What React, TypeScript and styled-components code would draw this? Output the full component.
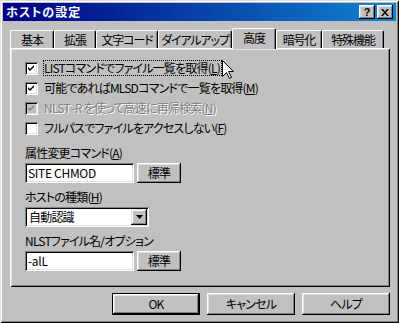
import React from "react";
import styled, { createGlobalStyle, css } from "styled-components";

const Global = createGlobalStyle`
  html, body { margin: 0; padding: 0; background: #c0c0c0; }
  body { font-family: "Noto Sans CJK JP", "Liberation Sans", sans-serif; font-size: 12px; }
`;

const FONT = `"Noto Sans CJK JP", "Liberation Sans", sans-serif`;

const Window = styled.div`
  position: relative;
  width: 399px;
  height: 323px;
  box-sizing: border-box;
  padding: 3px;
  background: #c0c0c0;
  box-shadow: inset 1px 1px #dfdfdf, inset -1px -1px #000, inset 2px 2px #fff, inset -2px -2px #808080;
  display: flex;
  flex-direction: column;
  font-family: ${FONT};
  font-size: 12px;
  font-feature-settings: "palt";
  letter-spacing: -0.8px;
  color: #000;
`;

const TitleBar = styled.div`
  height: 18px;
  display: flex;
  align-items: center;
  justify-content: space-between;
  background: linear-gradient(90deg, #000080, #1084d0);
  padding: 0 3px 0 3px;
`;

const Title = styled.span`
  color: #fff;
  font-weight: bold;
  font-size: 12px;
  line-height: 18px;
  letter-spacing: 1px;
`;

const CapButtons = styled.div`
  display: flex;
  gap: 2px;
`;

const CapBtn = styled.div`
  width: 16px;
  height: 14px;
  box-sizing: border-box;
  background: #c0c0c0;
  box-shadow: inset -1px -1px #000, inset 1px 1px #fff, inset -2px -2px #808080, inset 2px 2px #dfdfdf;
  display: flex;
  align-items: center;
  justify-content: center;
  font-family: "Liberation Sans", sans-serif;
  font-weight: bold;
  font-size: 11px;
  line-height: 14px;
  letter-spacing: 0;
`;

const Body = styled.div`
  flex: 1;
  display: flex;
  flex-direction: column;
  padding: 7px 6px 0 7px;
`;

const TabStrip = styled.div`
  height: 20px;
  display: flex;
  align-items: flex-end;
  position: relative;
  z-index: 2;
`;

const Tab = styled.div<{ $w: number; $active?: boolean }>`
  width: ${(p) => p.$w}px;
  height: 18px;
  box-sizing: border-box;
  background: #c0c0c0;
  border-top: 1px solid #fff;
  border-left: 1px solid #fff;
  border-right: 1px solid #000;
  border-radius: 2px 2px 0 0;
  box-shadow: inset -1px 0 #808080;
  display: flex;
  align-items: center;
  justify-content: center;
  font-size: 12px;
  line-height: 14px;
  letter-spacing: -1.1px;
  white-space: nowrap;
  ${(p) =>
    p.$active &&
    css`
      height: 21px;
      margin-bottom: -1px;
      padding-bottom: 3px;
    `}
`;

const Panel = styled.div`
  position: relative;
  z-index: 1;
  width: 380px;
  height: 239px;
  box-sizing: border-box;
  background: #c0c0c0;
  box-shadow: inset 1px 1px #fff, inset -1px -1px #000, inset 2px 2px #dfdfdf, inset -2px -2px #808080;
  padding: 10px 10px 0 15px;
  display: flex;
  flex-direction: column;
`;

const CheckRow = styled.div<{ $disabled?: boolean }>`
  height: 20px;
  display: flex;
  align-items: center;
  gap: 5px;
  color: ${(p) => (p.$disabled ? "#808080" : "#000")};
  text-shadow: ${(p) => (p.$disabled ? "1px 1px #fff" : "none")};
`;

const Box = styled.div<{ $disabled?: boolean }>`
  width: 13px;
  height: 13px;
  flex: none;
  box-sizing: border-box;
  background: ${(p) => (p.$disabled ? "#c0c0c0" : "#fff")};
  box-shadow: inset 1px 1px #808080, inset -1px -1px #fff, inset 2px 2px #000, inset -2px -2px #dfdfdf;
  display: flex;
  align-items: center;
  justify-content: center;
`;

const Label = styled.span<{ $focus?: boolean }>`
  line-height: 14px;
  white-space: pre;
  padding: 1px 2px 1px 1px;
  outline: ${(p) => (p.$focus ? "1px dotted #000" : "none")};
  outline-offset: -1px;
`;

const FieldLabel = styled.div<{ $mt: number }>`
  margin-top: ${(p) => p.$mt}px;
  line-height: 14px;
  white-space: nowrap;
`;

const FieldRow = styled.div`
  margin-top: 3px;
  display: flex;
  gap: 3px;
  align-items: flex-start;
`;

const Sunken = css`
  box-sizing: border-box;
  background: #fff;
  box-shadow: inset 1px 1px #808080, inset -1px -1px #fff, inset 2px 2px #000, inset -2px -2px #dfdfdf;
`;

const TextInput = styled.div`
  ${Sunken};
  width: 109px;
  height: 20px;
  padding: 2px 3px;
  line-height: 16px;
  font-size: 12px;
  letter-spacing: -0.3px;
`;

const Select = styled.div`
  ${Sunken};
  width: 124px;
  height: 20px;
  padding: 2px 2px 2px 4px;
  display: flex;
  align-items: center;
  justify-content: space-between;
  line-height: 16px;
`;

const DropBtn = styled.div`
  width: 16px;
  height: 16px;
  box-sizing: border-box;
  background: #c0c0c0;
  box-shadow: inset -1px -1px #000, inset 1px 1px #dfdfdf, inset -2px -2px #808080, inset 2px 2px #fff;
  display: flex;
  align-items: center;
  justify-content: center;
`;

const Button = styled.div<{ $w: number; $h: number; $default?: boolean }>`
  width: ${(p) => p.$w}px;
  height: ${(p) => p.$h}px;
  box-sizing: border-box;
  background: #c0c0c0;
  box-shadow: ${(p) =>
    p.$default
      ? "inset 0 0 0 1px #000, inset -2px -2px #000, inset 2px 2px #fff, inset -3px -3px #808080, inset 3px 3px #dfdfdf"
      : "inset -1px -1px #000, inset 1px 1px #fff, inset -2px -2px #808080, inset 2px 2px #dfdfdf"};
  display: flex;
  align-items: center;
  justify-content: center;
  line-height: 14px;
  white-space: nowrap;
`;

const ButtonRow = styled.div`
  margin-top: 6px;
  display: flex;
  justify-content: flex-end;
  gap: 7px;
`;

const Cursor = styled.svg`
  position: absolute;
  z-index: 10;
  left: 222px;
  top: 60px;
`;

const Check = ({ color }: { color: string }) => (
  <svg width="7" height="7" viewBox="0 0 7 7">
    <path d="M0 2 L2 4 L6 0 L6 2 L2 6 L0 4 Z" fill={color} />
  </svg>
);

const tabs = [
  { t: "基本", w: 44 },
  { t: "拡張", w: 42 },
  { t: "文字コード", w: 62 },
  { t: "ダイアルアップ", w: 74 },
  { t: "高度", w: 44, active: true },
  { t: "暗号化", w: 46 },
  { t: "特殊機能", w: 62 },
];

export default function App() {
  return (
    <>
      <Global />
      <Window>
        <TitleBar>
          <Title>ホストの設定</Title>
          <CapButtons>
            <CapBtn>?</CapBtn>
            <CapBtn>
              <svg width="8" height="7" viewBox="0 0 8 7">
                <path d="M0 0h2l2 2.5L6 0h2L5 3.5 8 7H6L4 4.5 2 7H0l3-3.5z" fill="#000" />
              </svg>
            </CapBtn>
          </CapButtons>
        </TitleBar>
        <Body>
          <TabStrip>
            {tabs.map((tb) => (
              <Tab key={tb.t} $w={tb.w} $active={tb.active}>
                {tb.t}
              </Tab>
            ))}
          </TabStrip>
          <Panel>
            <CheckRow>
              <Box><Check color="#000" /></Box>
              <Label $focus>LISTコマンドでファイル一覧を取得(<u>L</u>)</Label>
            </CheckRow>
            <CheckRow>
              <Box><Check color="#000" /></Box>
              <Label>可能であればMLSDコマンドで一覧を取得(<u>M</u>)</Label>
            </CheckRow>
            <CheckRow $disabled>
              <Box $disabled><Check color="#808080" /></Box>
              <Label>NLST -R を使って高速に再帰検索(<u>N</u>)</Label>
            </CheckRow>
            <CheckRow>
              <Box />
              <Label>フルパスでファイルをアクセスしない(<u>F</u>)</Label>
            </CheckRow>
            <FieldLabel $mt={8}>属性変更コマンド(<u>A</u>)</FieldLabel>
            <FieldRow>
              <TextInput>SITE CHMOD</TextInput>
              <Button $w={44} $h={20}>標準</Button>
            </FieldRow>
            <FieldLabel $mt={7}>ホストの種類(<u>H</u>)</FieldLabel>
            <FieldRow>
              <Select>
                <span>自動認識</span>
                <DropBtn>
                  <svg width="7" height="4" viewBox="0 0 7 4">
                    <path d="M0 0h7L3.5 4z" fill="#000" />
                  </svg>
                </DropBtn>
              </Select>
            </FieldRow>
            <FieldLabel $mt={7}>NLSTファイル名/オプション</FieldLabel>
            <FieldRow>
              <TextInput>-alL</TextInput>
              <Button $w={44} $h={20}>標準</Button>
            </FieldRow>
          </Panel>
          <ButtonRow>
            <Button $w={88} $h={22} $default>OK</Button>
            <Button $w={88} $h={22}>キャンセル</Button>
            <Button $w={88} $h={22}>ヘルプ</Button>
          </ButtonRow>
        </Body>
        <Cursor width="12" height="19" viewBox="0 0 12 19">
          <path d="M0.5 0.5 L0.5 16.5 L4.5 12.5 L7.5 18.5 L9.5 17.5 L6.5 11.5 L11.5 11.5 Z" fill="#fff" stroke="#000" strokeWidth="1" />
        </Cursor>
      </Window>
    </>
  );
}
